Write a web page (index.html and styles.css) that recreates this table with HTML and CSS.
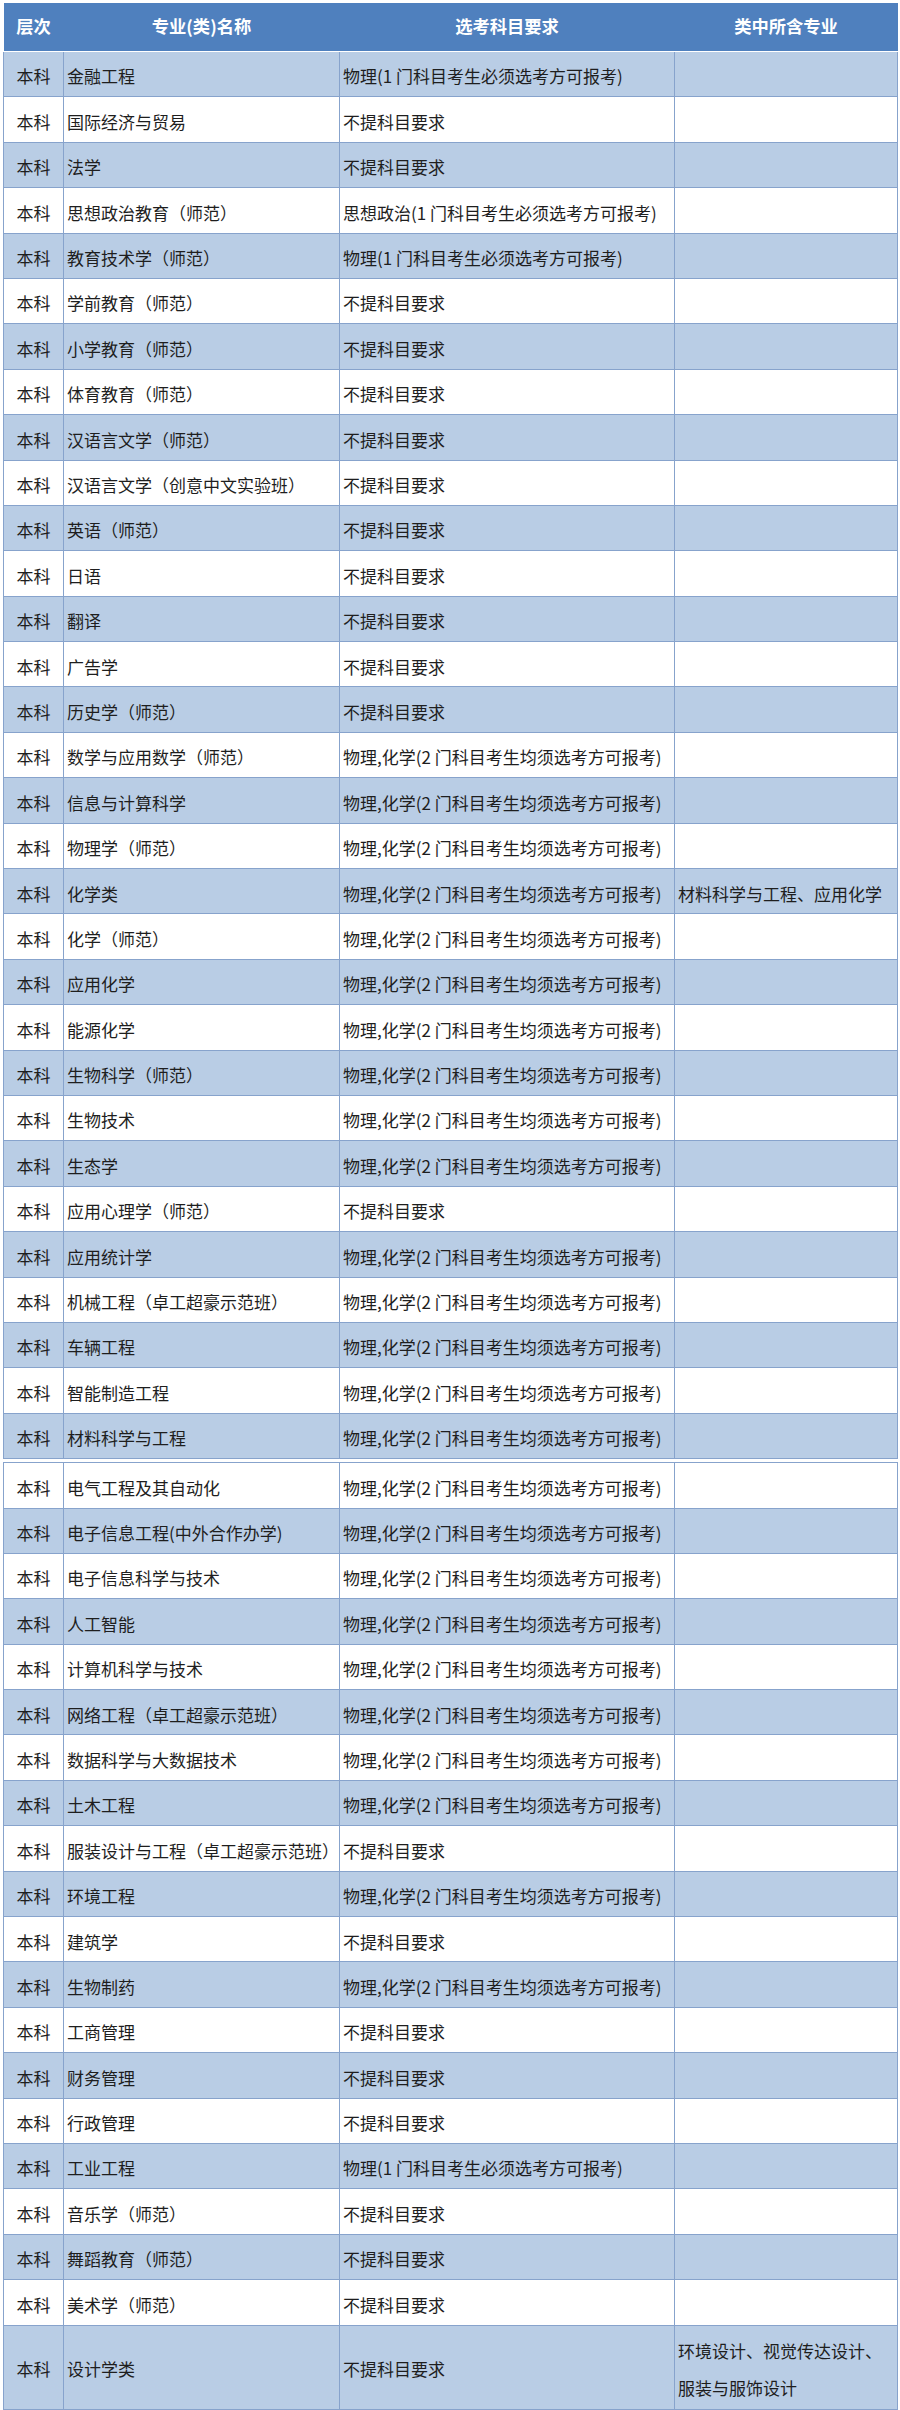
FILE: index.html
```html
<!DOCTYPE html>
<html lang="zh-CN">
<head>
<meta charset="utf-8">
<title>选考科目要求</title>
<link rel="stylesheet" href="styles.css">
</head>
<body>
<div class="page">
<table class="grid">
<colgroup><col class="c1"><col class="c2"><col class="c3"><col class="c4"></colgroup>
<thead>
<tr class="head"><th>层次</th><th>专业(类)名称</th><th>选考科目要求</th><th>类中所含专业</th></tr>
</thead>
<tbody>
<tr class="b"><td class="lv">本科</td><td>金融工程</td><td>物理(1 门科目考生必须选考方可报考)</td><td></td></tr>
<tr><td class="lv">本科</td><td>国际经济与贸易</td><td>不提科目要求</td><td></td></tr>
<tr class="b"><td class="lv">本科</td><td>法学</td><td>不提科目要求</td><td></td></tr>
<tr><td class="lv">本科</td><td>思想政治教育（师范）</td><td>思想政治(1 门科目考生必须选考方可报考)</td><td></td></tr>
<tr class="b"><td class="lv">本科</td><td>教育技术学（师范）</td><td>物理(1 门科目考生必须选考方可报考)</td><td></td></tr>
<tr><td class="lv">本科</td><td>学前教育（师范）</td><td>不提科目要求</td><td></td></tr>
<tr class="b"><td class="lv">本科</td><td>小学教育（师范）</td><td>不提科目要求</td><td></td></tr>
<tr><td class="lv">本科</td><td>体育教育（师范）</td><td>不提科目要求</td><td></td></tr>
<tr class="b"><td class="lv">本科</td><td>汉语言文学（师范）</td><td>不提科目要求</td><td></td></tr>
<tr><td class="lv">本科</td><td>汉语言文学（创意中文实验班）</td><td>不提科目要求</td><td></td></tr>
<tr class="b"><td class="lv">本科</td><td>英语（师范）</td><td>不提科目要求</td><td></td></tr>
<tr><td class="lv">本科</td><td>日语</td><td>不提科目要求</td><td></td></tr>
<tr class="b"><td class="lv">本科</td><td>翻译</td><td>不提科目要求</td><td></td></tr>
<tr><td class="lv">本科</td><td>广告学</td><td>不提科目要求</td><td></td></tr>
<tr class="b"><td class="lv">本科</td><td>历史学（师范）</td><td>不提科目要求</td><td></td></tr>
<tr><td class="lv">本科</td><td>数学与应用数学（师范）</td><td>物理,化学(2 门科目考生均须选考方可报考)</td><td></td></tr>
<tr class="b"><td class="lv">本科</td><td>信息与计算科学</td><td>物理,化学(2 门科目考生均须选考方可报考)</td><td></td></tr>
<tr><td class="lv">本科</td><td>物理学（师范）</td><td>物理,化学(2 门科目考生均须选考方可报考)</td><td></td></tr>
<tr class="b"><td class="lv">本科</td><td>化学类</td><td>物理,化学(2 门科目考生均须选考方可报考)</td><td>材料科学与工程、应用化学</td></tr>
<tr><td class="lv">本科</td><td>化学（师范）</td><td>物理,化学(2 门科目考生均须选考方可报考)</td><td></td></tr>
<tr class="b"><td class="lv">本科</td><td>应用化学</td><td>物理,化学(2 门科目考生均须选考方可报考)</td><td></td></tr>
<tr><td class="lv">本科</td><td>能源化学</td><td>物理,化学(2 门科目考生均须选考方可报考)</td><td></td></tr>
<tr class="b"><td class="lv">本科</td><td>生物科学（师范）</td><td>物理,化学(2 门科目考生均须选考方可报考)</td><td></td></tr>
<tr><td class="lv">本科</td><td>生物技术</td><td>物理,化学(2 门科目考生均须选考方可报考)</td><td></td></tr>
<tr class="b"><td class="lv">本科</td><td>生态学</td><td>物理,化学(2 门科目考生均须选考方可报考)</td><td></td></tr>
<tr><td class="lv">本科</td><td>应用心理学（师范）</td><td>不提科目要求</td><td></td></tr>
<tr class="b"><td class="lv">本科</td><td>应用统计学</td><td>物理,化学(2 门科目考生均须选考方可报考)</td><td></td></tr>
<tr><td class="lv">本科</td><td>机械工程（卓工超豪示范班）</td><td>物理,化学(2 门科目考生均须选考方可报考)</td><td></td></tr>
<tr class="b"><td class="lv">本科</td><td>车辆工程</td><td>物理,化学(2 门科目考生均须选考方可报考)</td><td></td></tr>
<tr><td class="lv">本科</td><td>智能制造工程</td><td>物理,化学(2 门科目考生均须选考方可报考)</td><td></td></tr>
<tr class="b"><td class="lv">本科</td><td>材料科学与工程</td><td>物理,化学(2 门科目考生均须选考方可报考)</td><td></td></tr>
</tbody>
</table>
<table class="grid grid-lower">
<colgroup><col class="c1"><col class="c2"><col class="c3"><col class="c4"></colgroup>
<tbody>
<tr><td class="lv">本科</td><td>电气工程及其自动化</td><td>物理,化学(2 门科目考生均须选考方可报考)</td><td></td></tr>
<tr class="b"><td class="lv">本科</td><td>电子信息工程(中外合作办学)</td><td>物理,化学(2 门科目考生均须选考方可报考)</td><td></td></tr>
<tr><td class="lv">本科</td><td>电子信息科学与技术</td><td>物理,化学(2 门科目考生均须选考方可报考)</td><td></td></tr>
<tr class="b"><td class="lv">本科</td><td>人工智能</td><td>物理,化学(2 门科目考生均须选考方可报考)</td><td></td></tr>
<tr><td class="lv">本科</td><td>计算机科学与技术</td><td>物理,化学(2 门科目考生均须选考方可报考)</td><td></td></tr>
<tr class="b"><td class="lv">本科</td><td>网络工程（卓工超豪示范班）</td><td>物理,化学(2 门科目考生均须选考方可报考)</td><td></td></tr>
<tr><td class="lv">本科</td><td>数据科学与大数据技术</td><td>物理,化学(2 门科目考生均须选考方可报考)</td><td></td></tr>
<tr class="b"><td class="lv">本科</td><td>土木工程</td><td>物理,化学(2 门科目考生均须选考方可报考)</td><td></td></tr>
<tr><td class="lv">本科</td><td>服装设计与工程（卓工超豪示范班）</td><td>不提科目要求</td><td></td></tr>
<tr class="b"><td class="lv">本科</td><td>环境工程</td><td>物理,化学(2 门科目考生均须选考方可报考)</td><td></td></tr>
<tr><td class="lv">本科</td><td>建筑学</td><td>不提科目要求</td><td></td></tr>
<tr class="b"><td class="lv">本科</td><td>生物制药</td><td>物理,化学(2 门科目考生均须选考方可报考)</td><td></td></tr>
<tr><td class="lv">本科</td><td>工商管理</td><td>不提科目要求</td><td></td></tr>
<tr class="b"><td class="lv">本科</td><td>财务管理</td><td>不提科目要求</td><td></td></tr>
<tr><td class="lv">本科</td><td>行政管理</td><td>不提科目要求</td><td></td></tr>
<tr class="b"><td class="lv">本科</td><td>工业工程</td><td>物理(1 门科目考生必须选考方可报考)</td><td></td></tr>
<tr><td class="lv">本科</td><td>音乐学（师范）</td><td>不提科目要求</td><td></td></tr>
<tr class="b"><td class="lv">本科</td><td>舞蹈教育（师范）</td><td>不提科目要求</td><td></td></tr>
<tr><td class="lv">本科</td><td>美术学（师范）</td><td>不提科目要求</td><td></td></tr>
<tr class="b tall"><td class="lv">本科</td><td>设计学类</td><td>不提科目要求</td><td class="wrap">环境设计、视觉传达设计、服装与服饰设计</td></tr>
</tbody>
</table>
</div>
</body>
</html>
```

FILE: styles.css
```css
html, body {
  margin: 0;
  padding: 0;
  background: #ffffff;
}

.page {
  padding: 3px 3px 0 3px;
  font-family: "Noto Sans CJK SC", "Noto Sans", sans-serif;
  font-size: 17px;
  color: #1e1e1e;
}

.grid {
  width: 894px;
  border-collapse: collapse;
  table-layout: fixed;
}

.grid-lower {
  margin-top: 3px;
}

.c1 { width: 60px; }
.c2 { width: 276px; }
.c3 { width: 335px; }
.c4 { width: 223px; }

.head th {
  background: #4f80be;
  color: #ffffff;
  font-weight: bold;
  font-size: 17.3px;
  text-align: center;
  height: 46px;
  padding: 0 0 2px 0;
  border-bottom: 1px solid #ffffff;
  line-height: 1;
}

.grid td {
  height: 45.4px;
  box-sizing: border-box;
  border: 1px solid #87a3cc;
  padding: 5px 0 0 3px;
  line-height: 36.4px;
  vertical-align: middle;
  white-space: nowrap;
}

.grid td.wrap {
  white-space: normal;
}

.grid td.lv {
  text-align: center;
  padding-left: 0;
}

.grid tr.b td {
  background: #b9cde5;
}

.grid tr.tall td {
  height: 84px;
}
```
